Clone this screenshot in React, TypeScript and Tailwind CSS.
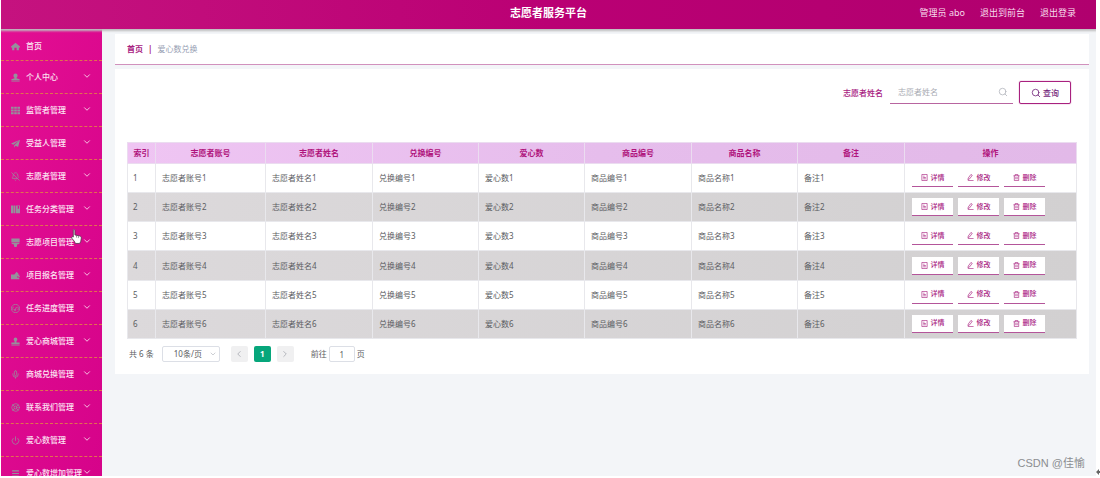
import type { ReactNode } from "react";
import { BellOff, ChevronDown, ChevronLeft, ChevronRight, LifeBuoy, Menu, Mic, Power, Search } from "lucide-react";

const fill = (children: ReactNode) => (
  <svg viewBox="0 0 24 24" className="size-full" fill="currentColor">
    {children}
  </svg>
);

const icons = {
  home: fill(<path d="M12 2 0 12v2.500h3V22h6v-7h6v7h6v-7.500h3V12z" />),
  user: fill(<path d="M12 1a5.500 5.500 0 0 1 5.500 5.700c0 2.800-1.300 5-3 6v1.500L23 16.500V19H1v-2.500l8.500-2.300v-1.500c-1.700-1-3-3.200-3-6A5.500 5.500 0 0 1 12 1zM1 20.500h22v2H1z" />),
  grid: fill(<path d="M0 2h7v5.500H0zm8.500 0h7v5.500h-7zM17 2h7v5.500h-7zM0 9.300h7v5.400H0zm8.500 0h7v5.400h-7zm8.500 0h7v5.400h-7zM0 16.500h7V22H0zm8.500 0h7V22h-7zm8.500 0h7V22h-7z" />),
  plane: fill(<path d="M24 2 0 12l6 3.500zM24 2 8.500 16.500V23l3.500-5 7 3z" />),
  books: fill(<path d="M0 1h6v21H0zm7 0h4.500v21H7zm6 0h11v21H13zm5 1.500v8l1.700-1.500 1.800 1.500v-8z" fillRule="evenodd" />),
  brush: fill(<path d="M1 1h22v10H1zm0 11.500h22c0 3-3 4.500-7 4.500v3.500a4 4 0 0 1-8 0V17c-4 0-7-1.500-7-4.500z" />),
  wallet: fill(<path d="M0 9h9l6-7 5 5-2 2h4v4h-6v4h6v5H0zm17 5h7v2h-7z" />),
  gauge: (
    <svg viewBox="0 0 24 24" className="size-full" fill="none" stroke="currentColor" strokeWidth="2">
      <circle cx="12" cy="12" r="11" />
      <path d="m11 15 4-7M5.500 16a7 7 0 0 1 1-8.500M18.500 16a7 7 0 0 0-1-8.500" />
      <circle cx="11" cy="16" r="2" />
    </svg>
  ),
  stamp: fill(<path d="M12 1a5.500 5.500 0 0 1 5 5.500c0 2-2 3.500-2.500 5.500v2.500H23V19H1v-4.500h8.500V12C9 10 7 8.500 7 6.500A5.500 5.500 0 0 1 12 1zM1 20.500h22v2H1z" />),
};

const menu = [
  { label: "个人中心", icon: icons.user },
  { label: "监管者管理", icon: icons.grid },
  { label: "受益人管理", icon: icons.plane },
  { label: "志愿者管理", icon: <BellOff className="size-full" strokeWidth={2} /> },
  { label: "任务分类管理", icon: icons.books },
  { label: "志愿项目管理", icon: icons.brush },
  { label: "项目报名管理", icon: icons.wallet },
  { label: "任务进度管理", icon: icons.gauge },
  { label: "爱心商城管理", icon: icons.stamp },
  { label: "商城兑换管理", icon: <Mic className="size-full" strokeWidth={2} /> },
  { label: "联系我们管理", icon: <LifeBuoy className="size-full" strokeWidth={2} /> },
  { label: "爱心数管理", icon: <Power className="size-full" strokeWidth={2} /> },
  { label: "爱心数增加管理", icon: <Menu className="size-full" strokeWidth={3} /> },
];

const columns = [
  { label: "志愿者账号", width: "w-[110px]" },
  { label: "志愿者姓名", width: "w-[107px]" },
  { label: "兑换编号", width: "w-[106px]" },
  { label: "爱心数", width: "w-[106px]" },
  { label: "商品编号", width: "w-[107px]" },
  { label: "商品名称", width: "w-[106px]" },
  { label: "备注", width: "w-[107px]" },
];

const rows = [1, 2, 3, 4, 5, 6];

function DetailIcon() {
  return (
    <svg viewBox="0 0 16 16" className="size-[7px]" fill="none" stroke="currentColor" strokeWidth="1.500">
      <path d="M2 1h12v14H2zM5 5h3M5 8h6M5 11h6" />
    </svg>
  );
}

function EditIcon() {
  return (
    <svg viewBox="0 0 16 16" className="size-[7px]" fill="none" stroke="currentColor" strokeWidth="1.500">
      <path d="m3 9 6-8 3 2-6 8-4 2zM2 15h13" />
    </svg>
  );
}

function TrashIcon() {
  return (
    <svg viewBox="0 0 16 16" className="size-[7px]" fill="none" stroke="currentColor" strokeWidth="1.500">
      <path d="M1 4h14M3 4v11h10V4M5 4V1h6v3M6.500 7v5M9.500 7v5" />
    </svg>
  );
}

function ActionButton({ icon, label }: { icon: ReactNode; label: string }) {
  return (
    <button className="flex h-[18px] w-[41px] items-center justify-center gap-[3px] border-b border-[#b4559a] bg-white text-[7px] font-medium text-[#a8217f]">
      {icon}
      {label}
    </button>
  );
}

function Header() {
  return (
    <header className="relative z-10 grid h-[29px] shrink-0 grid-cols-[1fr_auto_1fr] items-center bg-gradient-to-r from-[#c5127f] via-[#ba0074] to-[#b0006e] px-5 pb-[3px] text-white shadow-[0_1px_2px_1px_#bdbdbd]">
      <h1 className="col-start-2 text-[11px] font-bold">志愿者服务平台</h1>
      <div className="flex justify-end gap-[15px] text-[9px] text-[#f7dcec]">
        <span>管理员 abo</span>
        <a href="#front">退出到前台</a>
        <a href="#logout">退出登录</a>
      </div>
    </header>
  );
}

function Sidebar() {
  return (
    <nav className="w-[101px] shrink-0 overflow-hidden bg-gradient-to-br from-[#e30f93] to-[#d6038a] pt-[3px] text-[8px] font-medium text-[#fbe3f2]">
      <a href="#home" className="flex h-[29px] items-center border-b border-dashed border-[#e2704f] px-[10px]">
        <span className="mr-[6px] size-[9px] text-[#96909c]">{icons.home}</span>
        首页
      </a>
      {menu.map((item) => (
        <button
          key={item.label}
          className="flex h-[33px] w-full items-center border-b border-dashed border-[#e2704f] px-[10px] text-left whitespace-nowrap"
        >
          <span className="mr-[6px] size-[9px] shrink-0 text-[#96909c]">{item.icon}</span>
          <span className="w-14 shrink-0">{item.label}</span>
          <ChevronDown className="mb-[2px] ml-auto size-[10px] shrink-0" strokeWidth={2} />
        </button>
      ))}
    </nav>
  );
}

function SearchBar() {
  return (
    <form className="flex h-[23px] items-center justify-end pr-[6px]">
      <label htmlFor="name" className="mr-[7px] font-medium text-[#a8217f]">
        志愿者姓名
      </label>
      <div className="mr-[6px] flex h-[23px] w-[123px] items-center border-b border-[#b865a0] pr-[5px] pl-2">
        <input id="name" placeholder="志愿者姓名" className="min-w-0 flex-1 outline-none placeholder:text-[#a9acb3]" />
        <Search className="size-[10px] text-[#b4b7be]" strokeWidth={2} />
      </div>
      <button type="button" className="flex h-[23px] w-[52px] items-center justify-center gap-[2px] rounded-xs border border-[#a8217f] font-medium text-[#74277c] shadow-[0_0_1px_#a8217f]">
        <Search className="size-[10px]" strokeWidth={2} />
        查询
      </button>
    </form>
  );
}

function DataTable() {
  return (
    <table className="mt-[38px] h-[197px] w-full table-fixed border-collapse text-left">
      <thead>
        <tr className="h-[21px] bg-gradient-to-r from-[#efc5f3] via-[#e6bdec] to-[#e2b9e8] text-[#b0147c]">
          <th className="w-[28px] border border-[#ebdcf0] text-center font-bold">索引</th>
          {columns.map((col) => (
            <th key={col.label} className={`border border-[#ebdcf0] text-center font-bold ${col.width}`}>
              {col.label}
            </th>
          ))}
          <th className="border border-[#ebdcf0] text-center font-bold">操作</th>
        </tr>
      </thead>
      <tbody className="text-[#5b5d62]">
        {rows.map((n) => (
          <tr key={n} className="h-[29px] bg-white even:bg-gradient-to-r even:from-[#dcd9db] even:to-[#d2d0d1]">
            <td className="border border-[#e8e8ec] pl-[5px]">{n}</td>
            {columns.map((col) => (
              <td key={col.label} className="border border-[#e8e8ec] pl-[6px]">
                {col.label}
                {n}
              </td>
            ))}
            <td className="border border-[#e8e8ec] pl-[7px]">
              <div className="flex gap-[5px]">
                <ActionButton icon={<DetailIcon />} label="详情" />
                <ActionButton icon={<EditIcon />} label="修改" />
                <ActionButton icon={<TrashIcon />} label="删除" />
              </div>
            </td>
          </tr>
        ))}
      </tbody>
    </table>
  );
}

function Pagination() {
  return (
    <div className="mt-[7px] flex h-4 items-center pl-[2px] text-[#5b5d62]">
      <span className="mr-2">共 6 条</span>
      <div className="relative mr-[11px] h-4 w-[58px]">
        <select aria-label="每页条数" className="h-4 w-full appearance-none rounded-xs border border-[#dcdfe6] bg-white pl-[11px]">
          <option>10条/页</option>
        </select>
        <ChevronDown className="pointer-events-none absolute top-1 right-[3px] size-2 text-[#b4b7be]" />
      </div>
      <div className="flex gap-[6px]">
        <button aria-label="上一页" className="flex h-4 w-[17px] items-center justify-center rounded-xs bg-[#f0f0f1] text-[#a9acb3]">
          <ChevronLeft className="size-[10px]" />
        </button>
        <button className="h-4 w-[17px] rounded-xs bg-[#06a67b] font-bold text-white">1</button>
        <button aria-label="下一页" className="flex h-4 w-[17px] items-center justify-center rounded-xs bg-[#f0f0f1] text-[#a9acb3]">
          <ChevronRight className="size-[10px]" />
        </button>
      </div>
      <label className="ml-[17px] flex items-center gap-[2px]">
        前往
        <input defaultValue="1" className="h-4 w-[26px] rounded-xs border border-[#dcdfe6] text-center" />
        <span>页</span>
      </label>
    </div>
  );
}

export default function App() {
  return (
    <div className="relative h-screen overflow-hidden bg-white pr-1 pb-[2px] pl-px font-['Noto_Sans','Noto_Sans_CJK_SC',sans-serif] text-[8px] leading-3">
      <div className="flex h-full flex-col overflow-hidden bg-[#f3f5f8]">
        <Header />
        <div className="flex min-h-0 flex-1">
          <Sidebar />
          <main className="min-w-0 flex-1 pt-[5px] pr-[7px] pl-[13px]">
            <div className="flex h-[31px] items-center border-b border-[#d191bd] bg-white px-3">
              <a href="#home" className="font-bold text-[#a8217f]">首页</a>
              <span className="mx-[5px] font-bold text-[#a8217f]">|</span>
              <span className="text-[#97a0b3]">爱心数兑换</span>
            </div>
            <section className="mt-1 bg-white px-3 pt-3 pb-3">
              <SearchBar />
              <DataTable />
              <Pagination />
            </section>
          </main>
        </div>
      </div>

      {/* hand cursor over the menu */}
      <svg viewBox="0 0 20 28" className="pointer-events-none absolute top-[229px] left-[71px] z-20 h-[15px] w-[11px]">
        <path
          d="M4 2c1-1.500 3-1 3 1v8l9 2c2 .5 3 2 3 4l-1 6-2 4H8l-2-4-5-6c-1-2 1-3 3-2z"
          fill="#fff"
          stroke="#4a3a48"
          strokeWidth="1.500"
        />
        <path d="M10 12v4M13.500 13v4" stroke="#4a3a48" />
      </svg>
      <span className="absolute right-[15px] bottom-[9px] font-['Liberation_Sans','Noto_Sans_CJK_SC',sans-serif] text-[11px] text-[#8b8d91]">
        CSDN @佳愉
      </span>
      <svg viewBox="0 0 4 8" className="absolute right-0 bottom-[2px] h-2 w-1" fill="#666">
        <path d="m0 4 3-3v2h1v2H3v2z" />
      </svg>
    </div>
  );
}
